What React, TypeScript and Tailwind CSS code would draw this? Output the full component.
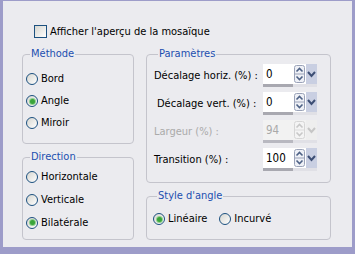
import React from 'react';

const font = { fontFamily: '"DejaVu Sans Condensed", "Liberation Sans", Arial, sans-serif' };

function Radio({ label, checked = false }: { label: string; checked?: boolean }) {
  return (
    <div className="flex items-center h-full">
      <span className="shrink-0 w-[12px] h-[12px] rounded-full border border-[#1c5180] bg-gradient-to-br from-[#d6d6d0] to-white flex items-center justify-center">
        {checked && <span className="w-[5px] h-[5px] rounded-full bg-[#3aa53a] ring-1 ring-[#8fd08f]" />}
      </span>
      <span className="ml-[3px] text-[11px] text-black leading-[14px] whitespace-nowrap">{label}</span>
    </div>
  );
}

function Group({ title, className, children }: { title: string; className: string; children: React.ReactNode }) {
  return (
    <fieldset className={`border border-[#c4c4cc] rounded-[4px] ${className}`}>
      <legend className="ml-[4px] px-[1px] text-[11px] leading-[14px] text-[#1c4fb0]">{title}</legend>
      {children}
    </fieldset>
  );
}

function Spin({ value, disabled = false }: { value: string; disabled?: boolean }) {
  const c = disabled ? '#c8c8c8' : '#4d6185';
  return (
    <div className="flex flex-col w-[54px] shrink-0">
      <div className={`flex h-[20px] ${disabled ? 'bg-[#f2f2f2]' : 'bg-white'}`}>
        <span className={`flex-1 pl-[3px] text-[11.5px] leading-[20px] ${disabled ? 'text-[#a9a9a9]' : 'text-black'}`}>{value}</span>
        <svg width="11" height="18" className="mt-[1px] shrink-0" viewBox="0 0 11 18">
          <rect x="0.5" y="0.5" width="10" height="17" rx="2" fill={disabled ? '#f4f4f4' : '#eef0f6'} stroke={disabled ? '#d6d6d6' : '#9aa2b8'} />
          <line x1="1" y1="9" x2="10" y2="9" stroke={disabled ? '#dcdcdc' : '#9aa2b8'} />
          <polyline points="2.5,6.5 5.5,3.5 8.5,6.5" fill="none" stroke={c} strokeWidth="1.6" />
          <polyline points="2.5,11.5 5.5,14.5 8.5,11.5" fill="none" stroke={c} strokeWidth="1.6" />
        </svg>
        <svg width="11" height="20" viewBox="0 0 11 20" className="ml-[1px] shrink-0">
          <rect x="0" y="0" width="11" height="20" fill={disabled ? '#eeeeee' : '#c9cfe2'} />
          <polyline points="2,8 5.5,12 9,8" fill="none" stroke={disabled ? '#c6c6c6' : '#3d4f75'} strokeWidth="2" />
        </svg>
      </div>
      <div className="flex h-[3px] bg-[#e0e0e6]">
        <div className={`w-[30px] ${disabled ? 'bg-[#b8b8c0]' : 'bg-[#a8a8b0]'}`} />
      </div>
    </div>
  );
}

function Row({ label, value, disabled = false, indent = false }: { label: string; value: string; disabled?: boolean; indent?: boolean }) {
  return (
    <div className="flex items-center h-[28px]">
      <span className={`shrink-0 w-[109px] whitespace-nowrap text-[11px] leading-[14px] mt-[1px] ${indent ? 'pl-[3px]' : ''} ${disabled ? 'text-[#aaaaaa]' : 'text-black'}`}>{label}</span>
      <Spin value={value} disabled={disabled} />
    </div>
  );
}

export default function App() {
  return (
    <div style={font} className="w-[355px] h-[254px] bg-[#9d9cc9] pl-[3px] pr-[3px] pt-[1px] pb-[7px]">
      <div className="h-full bg-[#ebebef] pt-[24px]">
        <div className="flex items-center ml-[31px] h-[13px]">
          <span className="w-[13px] h-[13px] border border-[#1c5180] bg-gradient-to-br from-[#d6d6d0] to-white" />
          <span className="ml-[3px] text-[11px] leading-[14px] text-black">Afficher l'aperçu de la mosaïque</span>
        </div>
        <div className="flex ml-[19px] mt-[9px] gap-[12px]">
          <div className="flex flex-col w-[112px] gap-[6px]">
            <Group title="Méthode" className="h-[97px] pl-[3px]">
              <div className="flex flex-col pt-[7px]">
                <div className="h-[22px]"><Radio label="Bord" /></div>
                <div className="h-[22px]"><Radio label="Angle" checked /></div>
                <div className="h-[22px]"><Radio label="Miroir" /></div>
              </div>
            </Group>
            <Group title="Direction" className="h-[90px] pl-[3px]">
              <div className="flex flex-col pt-[1px]">
                <div className="h-[23px]"><Radio label="Horizontale" /></div>
                <div className="h-[23px]"><Radio label="Verticale" /></div>
                <div className="h-[23px]"><Radio label="Bilatérale" checked /></div>
              </div>
            </Group>
          </div>
          <div className="flex flex-col w-[185px] gap-[6px]">
            <Group title="Paramètres" className="h-[136px] pl-[7px]">
              <div className="flex flex-col">
                <Row label="Décalage horiz. (%) :" value="0" />
                <Row label="Décalage vert. (%) :" value="0" indent />
                <Row label="Largeur (%) :" value="94" disabled />
                <Row label="Transition (%) :" value="100" />
              </div>
            </Group>
            <Group title="Style d'angle" className="h-[51px] pl-[6px]">
              <div className="flex h-[22px] mt-[5px] gap-[12px]">
                <Radio label="Linéaire" checked />
                <Radio label="Incurvé" />
              </div>
            </Group>
          </div>
        </div>
      </div>
    </div>
  );
}
